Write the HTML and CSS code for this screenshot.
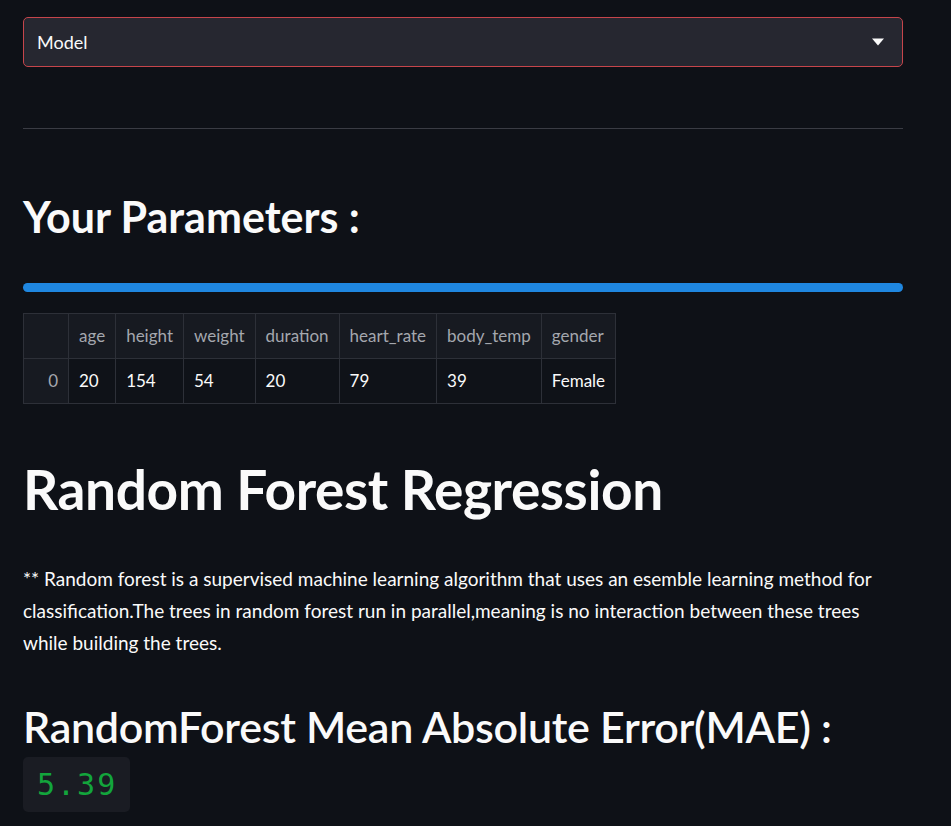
FILE: index.html
```html
<!DOCTYPE html>
<html>
<head>
<meta charset="utf-8">
<link rel="stylesheet" href="styles.css">
</head>
<body>
<main class="page">
  <div class="select">
    <span class="select-label">Model</span>
    <svg class="caret" width="12" height="8" viewBox="0 0 12 8"><path d="M0 0.5 L12 0.5 L6 7.5 Z" fill="#fafafa"/></svg>
  </div>
  <hr class="divider">
  <h2 class="h2 params-title">Your Parameters :</h2>
  <div class="progress"></div>
  <table class="df">
    <thead>
      <tr><th class="idx"></th><th>age</th><th>height</th><th>weight</th><th>duration</th><th>heart_rate</th><th>body_temp</th><th>gender</th></tr>
    </thead>
    <tbody>
      <tr><td class="idx">0</td><td>20</td><td>154</td><td>54</td><td>20</td><td>79</td><td>39</td><td>Female</td></tr>
    </tbody>
  </table>
  <h1 class="h1">Random Forest Regression</h1>
  <p class="para">** Random forest is a supervised machine learning algorithm that uses an esemble learning method for classification.The trees in random forest run in parallel,meaning is no interaction between these trees while building the trees.</p>
  <h2 class="h2 mae-title">RandomForest Mean Absolute Error(MAE) :</h2>
  <div class="code"><span class="num">5.39</span></div>
</main>
</body>
</html>
```
FILE: styles.css
```css
html, body {
  margin: 0;
  padding: 0;
  background: #0e1117;
  color: #fafafa;
  font-family: "Lato", "Noto Sans", sans-serif;
}
.page {
  width: 880px;
  padding: 17px 0 0 23px;
  display: flex;
  flex-direction: column;
  align-items: flex-start;
}
.select {
  box-sizing: border-box;
  width: 880px;
  height: 50px;
  background: #262730;
  border: 1px solid #c6454b;
  border-radius: 5px;
  display: flex;
  align-items: center;
  justify-content: space-between;
  padding: 0 18px 0 13px;
}
.select-label {
  font-size: 18px;
  color: #fafafa;
}
.caret { display: block; }
.divider {
  width: 880px;
  margin: 61px 0 0 0;
  border: none;
  border-top: 1px solid #3a3c44;
  height: 0;
}
.h2 {
  font-size: 43px;
  font-weight: 700;
  line-height: 1.2;
  margin: 0;
}
.params-title {
  margin-top: 62px;
}
.progress {
  width: 880px;
  height: 9px;
  border-radius: 5px;
  background: #1f87e0;
  margin-top: 40px;
}
.df {
  margin-top: 21px;
  border-collapse: collapse;
  font-size: 17px;
  background: #11141a;
}
.df th, .df td {
  border: 1px solid #2d3038;
  height: 44px;
  padding: 0 10px;
  text-align: left;
  font-weight: 400;
  white-space: nowrap;
}
.df th {
  color: #a4a7ae;
  background: #171a21;
}
.df td { color: #fafafa; background: #0f1218; }
.df .idx {
  color: #a4a7ae;
  text-align: right;
  width: 24px;
  background: #171a21;
}
.h1 {
  font-size: 55px;
  font-weight: 700;
  line-height: 1.2;
  margin: 52px 0 0 0;
  letter-spacing: -0.4px;
}
.para {
  font-size: 19px;
  line-height: 32px;
  margin: 41px 0 0 0;
  width: 880px;
}
.mae-title {
  margin-top: 42px;
  font-weight: 600;
  letter-spacing: -0.3px;
}
.code {
  margin-top: 5px;
  background: #1a1c23;
  border-radius: 5px;
  width: 107px;
  height: 55px;
  box-sizing: border-box;
  padding: 0 14px;
  display: flex;
  align-items: center;
}
.num {
  font-family: "DejaVu Sans Mono", monospace;
  font-size: 30px;
  color: #13a53c;
  letter-spacing: 2px;
}
```
